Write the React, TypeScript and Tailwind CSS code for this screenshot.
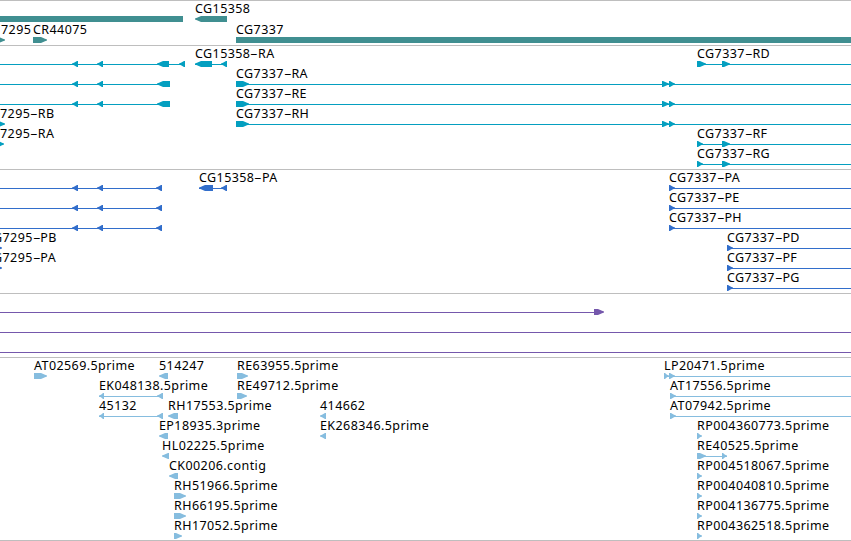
type Feature = { x1: number; x2: number; dir?: 'l' | 'r' }
type Label = { x: number; text: string }
type Row = { labels?: Label[]; lines?: [number, number][]; features?: Feature[] }
type Track = { id: string; color: string; rowClass: string; padClass: string; rows: Row[] }

const l = (x1: number, x2: number): Feature => ({ x1, x2, dir: 'l' })
const r = (x1: number, x2: number): Feature => ({ x1, x2, dir: 'r' })

const tracks: Track[] = [
  {
    id: 'gene',
    color: 'text-[#408f91]',
    rowClass: 'h-[21px]',
    padClass: 'pb-0.5',
    rows: [
      { labels: [{ x: 195, text: 'CG15358' }], features: [{ x1: 0, x2: 183 }, l(195, 227)] },
      {
        labels: [{ x: 1, text: '7295' }, { x: 33, text: 'CR44075' }, { x: 236, text: 'CG7337' }],
        features: [r(-5, 5), r(33, 47), { x1: 236, x2: 851 }],
      },
    ],
  },
  {
    id: 'transcript',
    color: 'text-[#049fc0]',
    rowClass: 'h-5',
    padClass: 'pb-[3px]',
    rows: [
      {
        labels: [{ x: 195, text: 'CG15358-RA' }, { x: 697, text: 'CG7337-RD' }],
        lines: [[0, 184], [195, 227], [697, 851]],
        features: [l(72, 78), l(97, 103), l(157, 169), l(179, 185), l(195, 212), l(221, 227), r(697, 706), r(722, 730)],
      },
      {
        labels: [{ x: 236, text: 'CG7337-RA' }],
        lines: [[0, 169], [236, 851]],
        features: [l(72, 78), l(97, 103), l(157, 170), r(236, 249), r(662, 669), r(669, 675)],
      },
      {
        labels: [{ x: 236, text: 'CG7337-RE' }],
        lines: [[0, 169], [236, 851]],
        features: [l(72, 78), l(97, 103), l(157, 170), r(236, 249), r(662, 669), r(669, 675)],
      },
      {
        labels: [{ x: 0, text: '7295-RB' }, { x: 236, text: 'CG7337-RH' }],
        lines: [[236, 851]],
        features: [r(-5, 5), r(236, 249), r(662, 669), r(669, 675)],
      },
      {
        labels: [{ x: 0, text: '7295-RA' }, { x: 697, text: 'CG7337-RF' }],
        lines: [[697, 851]],
        features: [r(-5, 4), r(697, 703), r(722, 730)],
      },
      {
        labels: [{ x: 697, text: 'CG7337-RG' }],
        lines: [[697, 851]],
        features: [r(697, 703), r(722, 730)],
      },
    ],
  },
  {
    id: 'protein',
    color: 'text-[#326ecb]',
    rowClass: 'h-5',
    padClass: 'pb-[3px]',
    rows: [
      {
        labels: [{ x: 199, text: 'CG15358-PA' }, { x: 669, text: 'CG7337-PA' }],
        lines: [[0, 161], [199, 226], [669, 851]],
        features: [l(72, 78), l(97, 103), l(156, 162), l(199, 213), l(221, 227), r(669, 675)],
      },
      {
        labels: [{ x: 669, text: 'CG7337-PE' }],
        lines: [[0, 161], [669, 851]],
        features: [l(72, 78), l(97, 103), l(156, 162), r(669, 675)],
      },
      {
        labels: [{ x: 669, text: 'CG7337-PH' }],
        lines: [[0, 161], [669, 851]],
        features: [l(72, 78), l(97, 103), l(156, 162), r(669, 675)],
      },
      {
        labels: [{ x: -7, text: 'G7295-PB' }, { x: 727, text: 'CG7337-PD' }],
        lines: [[727, 851]],
        features: [r(-5, 2), r(727, 733)],
      },
      {
        labels: [{ x: -7, text: 'G7295-PA' }, { x: 727, text: 'CG7337-PF' }],
        lines: [[727, 851]],
        features: [r(-5, 2), r(727, 733)],
      },
      {
        labels: [{ x: 727, text: 'CG7337-PG' }],
        lines: [[727, 851]],
        features: [r(727, 733)],
      },
    ],
  },
  {
    id: 'prediction',
    color: 'text-[#7558ac]',
    rowClass: 'h-5',
    padClass: 'pb-[3px]',
    rows: [
      { lines: [[0, 594]], features: [r(594, 604)] },
      { lines: [[0, 851]] },
      { lines: [[0, 851]] },
    ],
  },
  {
    id: 'cdna',
    color: 'text-[#86bddf]',
    rowClass: 'h-5',
    padClass: 'pb-0.5',
    rows: [
      {
        labels: [
          { x: 34, text: 'AT02569.5prime' },
          { x: 159, text: '514247' },
          { x: 237, text: 'RE63955.5prime' },
          { x: 664, text: 'LP20471.5prime' },
        ],
        lines: [[664, 851]],
        features: [r(34, 47), l(159, 168), r(237, 248), r(664, 669), r(669, 675)],
      },
      {
        labels: [
          { x: 99, text: 'EK048138.5prime' },
          { x: 237, text: 'RE49712.5prime' },
          { x: 670, text: 'AT17556.5prime' },
        ],
        lines: [[99, 162], [670, 851]],
        features: [l(99, 104), l(157, 163), r(237, 247), r(670, 676)],
      },
      {
        labels: [
          { x: 99, text: '45132' },
          { x: 168, text: 'RH17553.5prime' },
          { x: 320, text: '414662' },
          { x: 670, text: 'AT07942.5prime' },
        ],
        lines: [[99, 162], [670, 851]],
        features: [l(99, 104), l(157, 163), l(168, 178), l(320, 326), r(670, 676)],
      },
      {
        labels: [
          { x: 159, text: 'EP18935.3prime' },
          { x: 320, text: 'EK268346.5prime' },
          { x: 697, text: 'RP004360773.5prime' },
        ],
        features: [l(159, 168), l(320, 326), r(697, 702)],
      },
      {
        labels: [{ x: 162, text: 'HL02225.5prime' }, { x: 697, text: 'RE40525.5prime' }],
        lines: [[697, 727]],
        features: [l(162, 169), r(697, 706), r(722, 727)],
      },
      {
        labels: [{ x: 169, text: 'CK00206.contig' }, { x: 697, text: 'RP004518067.5prime' }],
        features: [l(169, 178), r(697, 702)],
      },
      {
        labels: [{ x: 174, text: 'RH51966.5prime' }, { x: 697, text: 'RP004040810.5prime' }],
        features: [r(174, 186), r(697, 702)],
      },
      {
        labels: [{ x: 174, text: 'RH66195.5prime' }, { x: 697, text: 'RP004136775.5prime' }],
        features: [r(174, 186), r(697, 702)],
      },
      {
        labels: [{ x: 174, text: 'RH17052.5prime' }, { x: 697, text: 'RP004362518.5prime' }],
        features: [r(174, 182), r(697, 702)],
      },
    ],
  },
]

// An exon: a 6px box, narrowed to a point on the side it is transcribed towards
function Exon({ x1, x2, dir }: Feature) {
  const head = Math.min(6, x2 - x1 - 1)
  if (dir === 'r') {
    return <polygon points={`${x1},15 ${x2 - head},15 ${x2 - 2},16.7 ${x2},17.4 ${x2},18.6 ${x2 - 2},19.3 ${x2 - head},21 ${x1},21`} />
  }
  if (dir === 'l') {
    return <polygon points={`${x2},15 ${x1 + head},15 ${x1 + 2},16.7 ${x1},17.4 ${x1},18.6 ${x1 + 2},19.3 ${x1 + head},21 ${x2},21`} />
  }
  return <rect x={x1} y={15} width={x2 - x1} height={6} />
}

function LabelText({ text }: { text: string }) {
  const [name, isoform] = text.split('-')
  if (!isoform) return text
  return (
    <>
      {name}
      <span className="inline-block w-[7.5px] origin-left scale-x-[1.9]">-</span>
      {isoform}
    </>
  )
}

function TrackRow({ row, className }: { row: Row; className: string }) {
  return (
    <div className={`relative ${className}`}>
      <svg className="block h-full w-[851px] overflow-visible" fill="currentColor">
        {row.lines?.map(([from, to]) => (
          <rect key={from} x={from} y={18} width={to - from} height={1} />
        ))}
        {row.features?.map((f) => (
          <Exon key={f.x1} {...f} />
        ))}
      </svg>
      {row.labels?.map((label) => (
        <span
          key={label.text}
          className="absolute top-0 whitespace-nowrap text-black"
          style={{ left: label.x }}
        >
          <LabelText text={label.text} />
        </span>
      ))}
    </div>
  )
}

export default function App() {
  return (
    <div className="h-[541px] w-[851px] overflow-hidden border-t border-[#bebebe] bg-white font-['Noto_Sans',sans-serif] text-[12.5px] leading-4 tracking-[0.42px]">
      {tracks.map((track) => (
        <section key={track.id} className={`border-b border-[#bebebe] ${track.color} ${track.padClass}`}>
          {track.rows.map((row, i) => (
            <TrackRow key={i} row={row} className={track.rowClass} />
          ))}
        </section>
      ))}
    </div>
  )
}
